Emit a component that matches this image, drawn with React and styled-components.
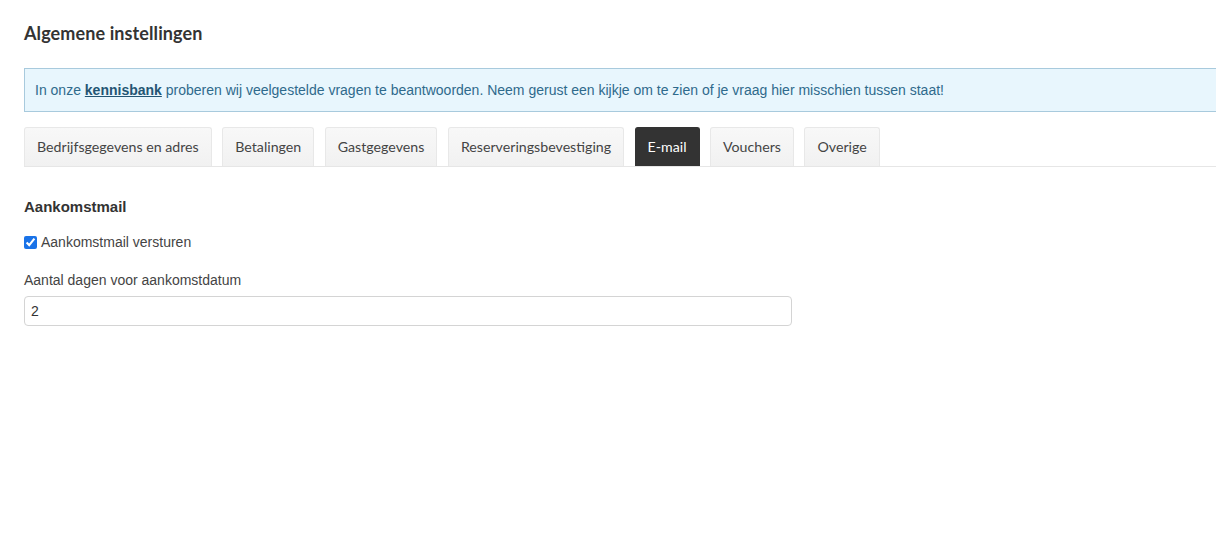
import * as React from 'react';
import styled, { createGlobalStyle } from 'styled-components';

const GlobalStyle = createGlobalStyle`
  html, body {
    margin: 0;
    padding: 0;
    background: #fff;
    overflow: hidden;
  }
  body {
    font-family: "Liberation Sans", Arial, sans-serif;
    color: #333;
  }
`;

const Page = styled.div`
  padding: 23px 0 0 24px;
  width: 1240px;
`;

const Heading = styled.h1`
  margin: 0 0 25px 0;
  font-family: Lato, "Open Sans", sans-serif;
  font-weight: 700;
  font-size: 18px;
  letter-spacing: 0.1px;
  line-height: 20px;
  color: #333;
`;

const Alert = styled.div`
  background: #e8f6fd;
  border: 1px solid #a8cadd;
  color: #2f6a8c;
  font-size: 14px;
  line-height: 20px;
  padding: 11px 10px 11px 10px;
  margin-bottom: 15px;
`;

const AlertLink = styled.a`
  color: #245573;
  font-weight: 700;
  text-decoration: underline;
`;

const TabBar = styled.div`
  display: flex;
  gap: 10.5px;
  border-bottom: 1px solid #e6e6e6;
`;

const Tab = styled.div`
  font-family: Lato, "Open Sans", sans-serif;
  font-size: 14.2px;
  line-height: 20px;
  padding: 9px 12px 9px 12px;
  border: 1px solid ${p => (p.$active ? '#333' : '#e8e8e8')};
  border-bottom: none;
  border-radius: 3px 3px 0 0;
  background: ${p => (p.$active ? '#333' : 'linear-gradient(#f8f8f8, #f1f1f1)')};
  color: ${p => (p.$active ? '#fff' : '#444')};
`;

const Section = styled.div`
  padding-top: 31px;
  width: 768px;
`;

const SectionTitle = styled.h2`
  margin: 0 0 18px 0;
  font-size: 15px;
  font-weight: 700;
  line-height: 18px;
  color: #333;
`;

const CheckRow = styled.label`
  display: flex;
  align-items: center;
  gap: 4px;
  font-size: 14px;
  color: #444;
  margin-bottom: 21px;
`;

const Check = styled.input`
  margin: 0;
  width: 13px;
  height: 13px;
  accent-color: #1a73e8;
`;

const FieldLabel = styled.div`
  font-size: 14px;
  color: #444;
  line-height: 18px;
  margin-bottom: 7px;
`;

const TextInput = styled.input`
  box-sizing: border-box;
  width: 768px;
  height: 30px;
  border: 1px solid #d4d4d4;
  border-radius: 4px;
  padding: 0 6px;
  font-family: "Liberation Sans", Arial, sans-serif;
  font-size: 14px;
  color: #333;
  outline: none;
`;

const tabs = [
  'Bedrijfsgegevens en adres',
  'Betalingen',
  'Gastgegevens',
  'Reserveringsbevestiging',
  'E-mail',
  'Vouchers',
  'Overige',
];

export default function App() {
  return (
    <>
      <GlobalStyle />
      <Page>
        <Heading>Algemene instellingen</Heading>
        <Alert>
          In onze <AlertLink href="#">kennisbank</AlertLink> proberen wij veelgestelde vragen te beantwoorden. Neem gerust een kijkje om te zien of je vraag hier misschien tussen staat!
        </Alert>
        <TabBar>
          {tabs.map(t => (
            <Tab key={t} $active={t === 'E-mail'}>{t}</Tab>
          ))}
        </TabBar>
        <Section>
          <SectionTitle>Aankomstmail</SectionTitle>
          <CheckRow>
            <Check type="checkbox" defaultChecked />
            Aankomstmail versturen
          </CheckRow>
          <FieldLabel>Aantal dagen voor aankomstdatum</FieldLabel>
          <TextInput type="text" defaultValue="2" />
        </Section>
      </Page>
    </>
  );
}
